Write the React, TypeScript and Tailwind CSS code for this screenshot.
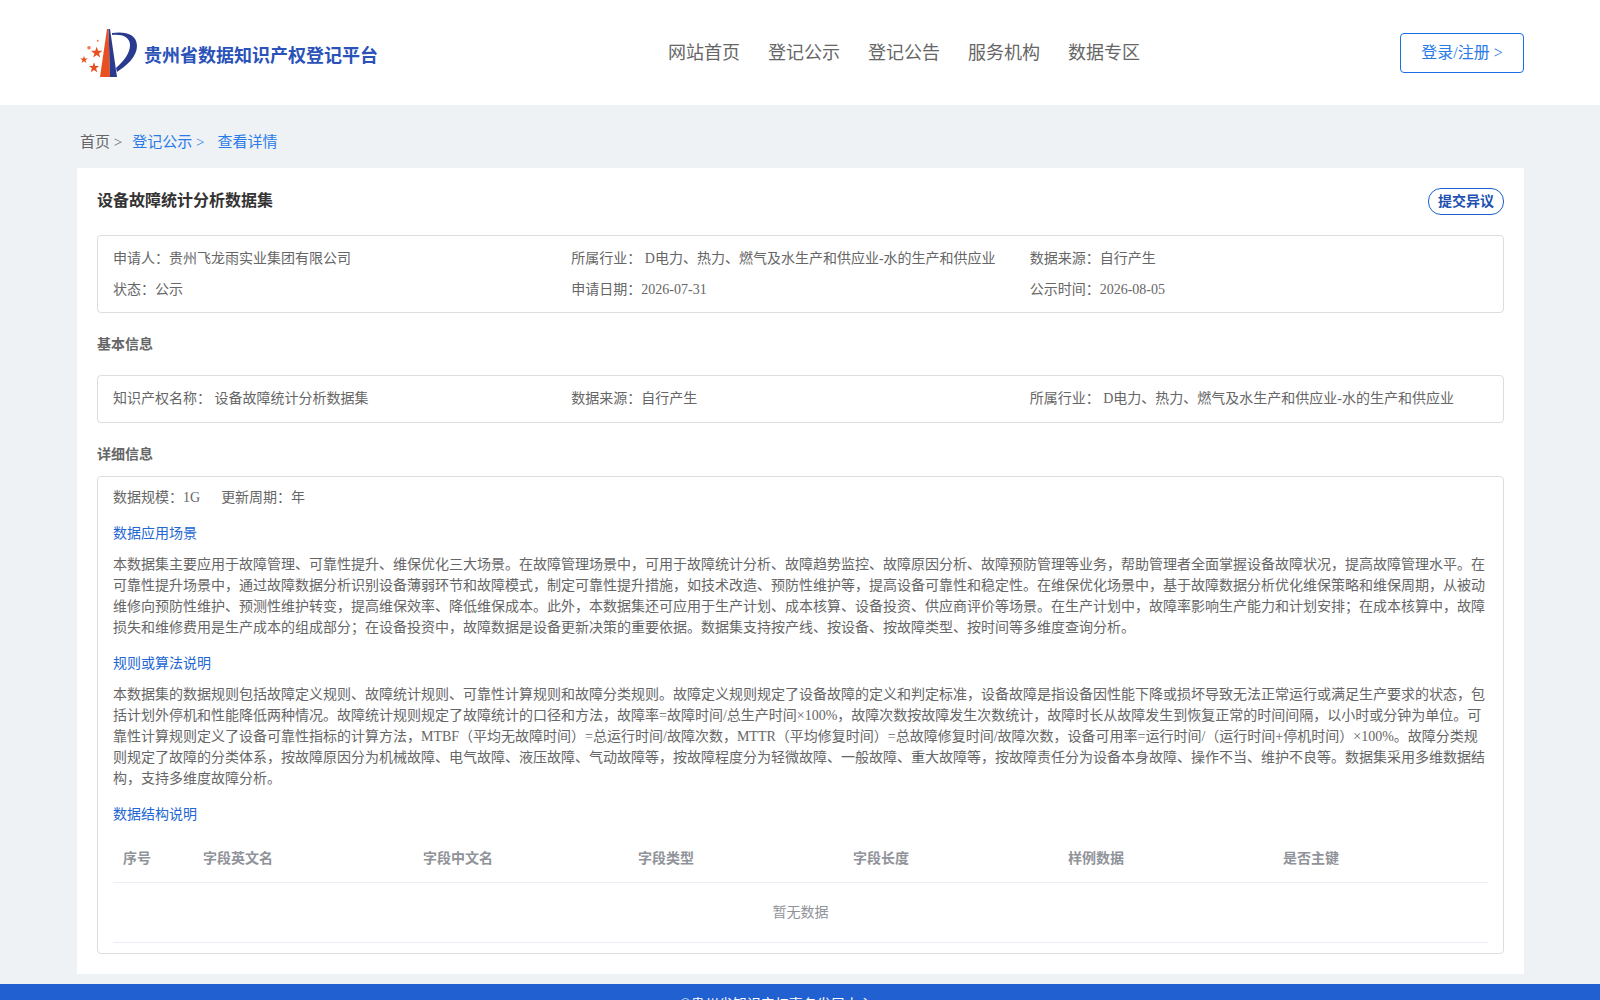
const para1 =
  "本数据集主要应用于故障管理、可靠性提升、维保优化三大场景。在故障管理场景中，可用于故障统计分析、故障趋势监控、故障原因分析、故障预防管理等业务，帮助管理者全面掌握设备故障状况，提高故障管理水平。在可靠性提升场景中，通过故障数据分析识别设备薄弱环节和故障模式，制定可靠性提升措施，如技术改造、预防性维护等，提高设备可靠性和稳定性。在维保优化场景中，基于故障数据分析优化维保策略和维保周期，从被动维修向预防性维护、预测性维护转变，提高维保效率、降低维保成本。此外，本数据集还可应用于生产计划、成本核算、设备投资、供应商评价等场景。在生产计划中，故障率影响生产能力和计划安排；在成本核算中，故障损失和维修费用是生产成本的组成部分；在设备投资中，故障数据是设备更新决策的重要依据。数据集支持按产线、按设备、按故障类型、按时间等多维度查询分析。";

const para2 =
  "本数据集的数据规则包括故障定义规则、故障统计规则、可靠性计算规则和故障分类规则。故障定义规则规定了设备故障的定义和判定标准，设备故障是指设备因性能下降或损坏导致无法正常运行或满足生产要求的状态，包括计划外停机和性能降低两种情况。故障统计规则规定了故障统计的口径和方法，故障率=故障时间/总生产时间×100%，故障次数按故障发生次数统计，故障时长从故障发生到恢复正常的时间间隔，以小时或分钟为单位。可靠性计算规则定义了设备可靠性指标的计算方法，MTBF（平均无故障时间）=总运行时间/故障次数，MTTR（平均修复时间）=总故障修复时间/故障次数，设备可用率=运行时间/（运行时间+停机时间）×100%。故障分类规则规定了故障的分类体系，按故障原因分为机械故障、电气故障、液压故障、气动故障等，按故障程度分为轻微故障、一般故障、重大故障等，按故障责任分为设备本身故障、操作不当、维护不良等。数据集采用多维数据结构，支持多维度故障分析。";

const navItems = ["网站首页", "登记公示", "登记公告", "服务机构", "数据专区"];
const columns = ["序号", "字段英文名", "字段中文名", "字段类型", "字段长度", "样例数据", "是否主键"];
const industry = "D电力、热力、燃气及水生产和供应业-水的生产和供应业";

const Star = ({ x, y, r }: { x: number; y: number; r: number }) => (
  <polygon
    transform={`translate(${x} ${y}) scale(${r})`}
    points="0,-1 0.24,-0.31 0.95,-0.31 0.38,0.12 0.59,0.81 0,0.4 -0.59,0.81 -0.38,0.12 -0.95,-0.31 -0.24,-0.31"
    fill="#e8501f"
  />
);

const Logo = () => (
  <svg width="58" height="52" viewBox="0 0 58 52" className="shrink-0">
    <polygon points="27,3 28.5,3 30,51 20,51" fill="#e8501f" />
    <polygon points="28.5,3 30,3 37,51 30,51" fill="#2a3a8f" />
    <path d="M32 7 C45 5 57 8 57 20 C57 31 46 40 37 46 L36 42 C44 35 50 27 50 19 C50 11 42 8 32 9 Z" fill="#2a3a8f" />
    <Star x={16.7} y={26.7} r={6} />
    <Star x={14} y={41.7} r={5.5} />
    <Star x={4} y={33.7} r={4} />
    <circle cx="9" cy="21.7" r="1.8" fill="#ef7b50" />
    <circle cx="17.7" cy="14.7" r="1" fill="#ef7b50" />
  </svg>
);

export default function App() {
  return (
    <div className="bg-[#eff2f5] font-['Liberation_Serif','Noto_Sans_CJK_SC',serif] text-[14px] text-[#666]">
      <header className="h-[105px] bg-white pl-[80px] pr-[76px] flex items-center justify-between">
        <div className="w-[320px] flex items-center gap-[6px] pb-[2px]">
          <Logo />
          <span className="text-[18px] font-bold text-[#2a52b8] pt-[10px] whitespace-nowrap">
            贵州省数据知识产权登记平台
          </span>
        </div>
        <nav className="flex gap-[28px] text-[18px] text-[#666] ml-[8px] pt-[2px]">
          {navItems.map((item) => (
            <a key={item}>{item}</a>
          ))}
        </nav>
        <button className="w-[124px] h-[40px] pt-px border border-[#1a6fe8] rounded text-[16px] text-[#2a7be8]">
          登录/注册 &gt;
        </button>
      </header>

      <div className="pl-[77px] pr-[76px]">
        <div className="h-[63px] flex items-center pl-[3px] text-[15px] pt-[12px]">
          <span>首页 &gt;</span>
          <span className="ml-[10px] text-[#2a7be8]">登记公示 &gt;</span>
          <span className="ml-[13px] text-[#2a7be8]">查看详情</span>
        </div>

        <main className="bg-white px-[20px] pt-[20px] pb-[20px]">
          <div className="flex justify-between items-start">
            <h1 className="text-[16px] font-bold text-[#333] leading-[26px]">设备故障统计分析数据集</h1>
            <button className="w-[76px] h-[27px] border border-[#1a5fd0] rounded-[13px] text-[14px] font-bold text-[#2050b0]">
              提交异议
            </button>
          </div>

          <div className="mt-[20px] border border-[#ddd] rounded px-[15px] pt-[8px] pb-[7px] grid grid-cols-3 gap-y-px leading-[30px]">
            <div>申请人：贵州飞龙雨实业集团有限公司</div>
            <div>所属行业： {industry}</div>
            <div>数据来源：自行产生</div>
            <div>状态：公示</div>
            <div>申请日期：2026-07-31</div>
            <div>公示时间：2026-08-05</div>
          </div>

          <h2 className="mt-[21px] leading-[21px] font-bold">基本信息</h2>
          <div className="mt-[20px] border border-[#ddd] rounded px-[15px] py-[8px] grid grid-cols-3 leading-[30px]">
            <div>知识产权名称： 设备故障统计分析数据集</div>
            <div>数据来源：自行产生</div>
            <div>所属行业： {industry}</div>
          </div>

          <h2 className="mt-[21px] leading-[21px] font-bold">详细信息</h2>
          <div className="mt-[11px] border border-[#ddd] rounded px-[15px] pt-[10px] pb-[10px]">
            <div className="leading-[21px] flex gap-[21px]">
              <span>数据规模：1G</span>
              <span>更新周期：年</span>
            </div>
            <h3 className="mt-[15px] leading-[21px] text-[#2266d3]">数据应用场景</h3>
            <p className="mt-[10px] leading-[21px]">{para1}</p>
            <h3 className="mt-[15px] leading-[21px] text-[#2266d3]">规则或算法说明</h3>
            <p className="mt-[10px] leading-[21px]">{para2}</p>
            <h3 className="mt-[15px] leading-[21px] text-[#2266d3]">数据结构说明</h3>
            <div className="mt-[10px]">
              <div className="grid grid-cols-[80px_220px_215px_215px_215px_215px_1fr] h-[48px] items-center border-b border-[#ebeef5] font-bold text-[#909399]">
                {columns.map((col) => (
                  <div key={col} className="pl-[10px]">
                    {col}
                  </div>
                ))}
              </div>
              <div className="h-[60px] flex items-center justify-center border-b border-[#ebeef5] text-[#909399]">
                暂无数据
              </div>
            </div>
          </div>
        </main>
      </div>

      <footer className="mt-[10px] h-[60px] bg-[#2060d0] text-white text-[14px] pt-[10px] pl-[680px]">
        ©贵州省知识产权事务发展中心
      </footer>
    </div>
  );
}
